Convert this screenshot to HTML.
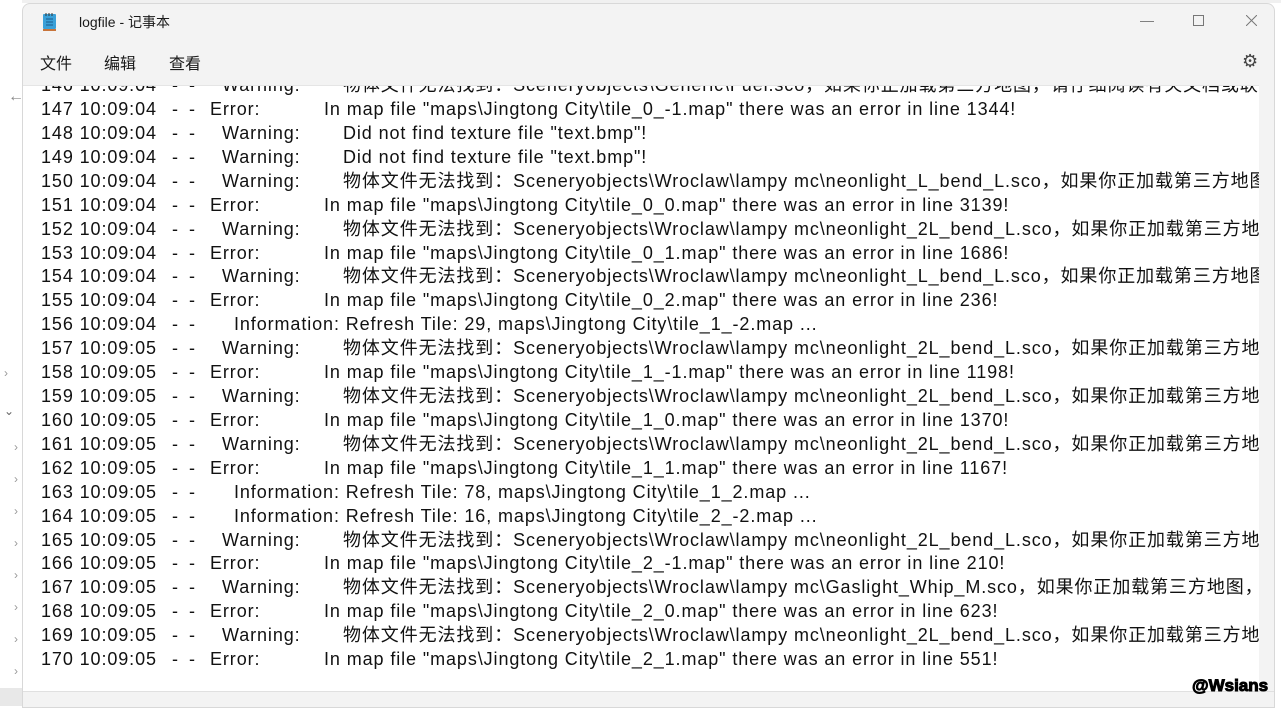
<!DOCTYPE html>
<html><head><meta charset="utf-8"><style>
body{margin:0;width:1281px;height:706px;overflow:hidden;background:#fff;font-family:"Liberation Sans","Noto Sans CJK SC",sans-serif;position:relative}
.bg{position:absolute;left:0;top:0;width:22px;height:706px;background:#fff}
.bgtop{position:absolute;left:0;top:0;width:1281px;height:3px;background:#f0f0f0}
.win{position:absolute;left:22px;top:3px;width:1251px;height:703px;background:#f3f3f3;border:1px solid #d8d8d8;border-radius:8px 8px 0 0;overflow:hidden}
.text{position:absolute;left:0;top:81px;width:1236px;height:606px;background:#fff;overflow:hidden;border-top:1px solid #e5e5e5}
.row{position:absolute;left:0;height:24px;line-height:24px;font-size:18px;color:#111;white-space:pre;letter-spacing:0.9px;margin-top:-2px}
.row span{position:absolute;top:0}
.status{position:absolute;left:0;top:687px;width:1251px;height:20px;background:#f3f3f3;border-top:1px solid #e0e0e0}
.menu{position:absolute;top:46px;font-size:16px;color:#1a1a1a}
.title{position:absolute;left:56px;top:8px;font-size:14px;color:#1a1a1a}
.ctl{position:absolute;top:8px;color:#777;font-size:14px}
.wm{position:absolute;left:1192px;top:676px;font-size:17px;font-weight:bold;color:#000;-webkit-text-stroke:1px #000;text-shadow:0 0 2px #fff}
</style></head><body>
<div class="bgtop"></div><div class="bg">
<div style="position:absolute;left:8px;top:88px;color:#888;font-size:16px">←</div>
<div style="position:absolute;left:4px;top:366px;color:#999;font-size:12px">›</div>
<div style="position:absolute;left:4px;top:404px;color:#666;font-size:12px">⌄</div>
<div style="position:absolute;left:14px;top:440px;color:#999;font-size:12px">›</div>
<div style="position:absolute;left:14px;top:472px;color:#999;font-size:12px">›</div>
<div style="position:absolute;left:14px;top:504px;color:#999;font-size:12px">›</div>
<div style="position:absolute;left:14px;top:536px;color:#999;font-size:12px">›</div>
<div style="position:absolute;left:14px;top:568px;color:#999;font-size:12px">›</div>
<div style="position:absolute;left:14px;top:600px;color:#999;font-size:12px">›</div>
<div style="position:absolute;left:14px;top:632px;color:#999;font-size:12px">›</div>
<div style="position:absolute;left:14px;top:664px;color:#999;font-size:12px">›</div>
<div style="position:absolute;left:0;top:688px;width:22px;height:18px;background:#e8e8e8"></div>
</div>
<div class="win">
<svg style="position:absolute;left:19px;top:8px" width="16" height="20" viewBox="0 0 16 20"><rect x="1" y="2" width="13" height="15" rx="1" fill="#3aa0d8"/><rect x="1" y="17" width="13" height="2" fill="#c8743a"/><path d="M4 7h7M4 10h7M4 13h7" stroke="#1a5a8a" stroke-width="1"/><path d="M4 1v3M7 1v3M10 1v3" stroke="#333" stroke-width="1"/></svg>
<div class="title">logfile - 记事本</div>
<div class="ctl" style="left:1117px">—</div>
<svg style="position:absolute;left:1170px;top:11px" width="11" height="11"><rect x="0.5" y="0.5" width="10" height="10" fill="none" stroke="#777"/></svg>
<svg style="position:absolute;left:1223px;top:11px" width="11" height="11"><path d="M0 0L11 11M11 0L0 11" stroke="#777"/></svg>
<div class="menu" style="left:17px">文件</div>
<div class="menu" style="left:81px">编辑</div>
<div class="menu" style="left:146px">查看</div>
<div style="position:absolute;left:1219px;top:47px;font-size:18px;color:#444">⚙</div>
<div class="text">
<div class="row" style="top:-11px"><span style="left:18px">146 10:09:04</span><span style="left:149px">-</span><span style="left:166px">-</span><span style="left:199px">Warning:</span><span style="left:320px">物体文件无法找到：Sceneryobjects\Generic\Fuel.sco，如果你正加载第三方地图，请仔细阅读有关文档或联系</span></div>
<div class="row" style="top:13px"><span style="left:18px">147 10:09:04</span><span style="left:149px">-</span><span style="left:166px">-</span><span style="left:187px">Error:</span><span style="left:301px">In map file "maps\Jingtong City\tile_0_-1.map" there was an error in line 1344!</span></div>
<div class="row" style="top:37px"><span style="left:18px">148 10:09:04</span><span style="left:149px">-</span><span style="left:166px">-</span><span style="left:199px">Warning:</span><span style="left:320px">Did not find texture file "text.bmp"!</span></div>
<div class="row" style="top:61px"><span style="left:18px">149 10:09:04</span><span style="left:149px">-</span><span style="left:166px">-</span><span style="left:199px">Warning:</span><span style="left:320px">Did not find texture file "text.bmp"!</span></div>
<div class="row" style="top:85px"><span style="left:18px">150 10:09:04</span><span style="left:149px">-</span><span style="left:166px">-</span><span style="left:199px">Warning:</span><span style="left:320px">物体文件无法找到：Sceneryobjects\Wroclaw\lampy mc\neonlight_L_bend_L.sco，如果你正加载第三方地图</span></div>
<div class="row" style="top:109px"><span style="left:18px">151 10:09:04</span><span style="left:149px">-</span><span style="left:166px">-</span><span style="left:187px">Error:</span><span style="left:301px">In map file "maps\Jingtong City\tile_0_0.map" there was an error in line 3139!</span></div>
<div class="row" style="top:133px"><span style="left:18px">152 10:09:04</span><span style="left:149px">-</span><span style="left:166px">-</span><span style="left:199px">Warning:</span><span style="left:320px">物体文件无法找到：Sceneryobjects\Wroclaw\lampy mc\neonlight_2L_bend_L.sco，如果你正加载第三方地图</span></div>
<div class="row" style="top:157px"><span style="left:18px">153 10:09:04</span><span style="left:149px">-</span><span style="left:166px">-</span><span style="left:187px">Error:</span><span style="left:301px">In map file "maps\Jingtong City\tile_0_1.map" there was an error in line 1686!</span></div>
<div class="row" style="top:180px"><span style="left:18px">154 10:09:04</span><span style="left:149px">-</span><span style="left:166px">-</span><span style="left:199px">Warning:</span><span style="left:320px">物体文件无法找到：Sceneryobjects\Wroclaw\lampy mc\neonlight_L_bend_L.sco，如果你正加载第三方地图</span></div>
<div class="row" style="top:204px"><span style="left:18px">155 10:09:04</span><span style="left:149px">-</span><span style="left:166px">-</span><span style="left:187px">Error:</span><span style="left:301px">In map file "maps\Jingtong City\tile_0_2.map" there was an error in line 236!</span></div>
<div class="row" style="top:228px"><span style="left:18px">156 10:09:04</span><span style="left:149px">-</span><span style="left:166px">-</span><span style="left:211px">Information: Refresh Tile: 29, maps\Jingtong City\tile_1_-2.map ...</span></div>
<div class="row" style="top:252px"><span style="left:18px">157 10:09:05</span><span style="left:149px">-</span><span style="left:166px">-</span><span style="left:199px">Warning:</span><span style="left:320px">物体文件无法找到：Sceneryobjects\Wroclaw\lampy mc\neonlight_2L_bend_L.sco，如果你正加载第三方地图</span></div>
<div class="row" style="top:276px"><span style="left:18px">158 10:09:05</span><span style="left:149px">-</span><span style="left:166px">-</span><span style="left:187px">Error:</span><span style="left:301px">In map file "maps\Jingtong City\tile_1_-1.map" there was an error in line 1198!</span></div>
<div class="row" style="top:300px"><span style="left:18px">159 10:09:05</span><span style="left:149px">-</span><span style="left:166px">-</span><span style="left:199px">Warning:</span><span style="left:320px">物体文件无法找到：Sceneryobjects\Wroclaw\lampy mc\neonlight_2L_bend_L.sco，如果你正加载第三方地图</span></div>
<div class="row" style="top:324px"><span style="left:18px">160 10:09:05</span><span style="left:149px">-</span><span style="left:166px">-</span><span style="left:187px">Error:</span><span style="left:301px">In map file "maps\Jingtong City\tile_1_0.map" there was an error in line 1370!</span></div>
<div class="row" style="top:348px"><span style="left:18px">161 10:09:05</span><span style="left:149px">-</span><span style="left:166px">-</span><span style="left:199px">Warning:</span><span style="left:320px">物体文件无法找到：Sceneryobjects\Wroclaw\lampy mc\neonlight_2L_bend_L.sco，如果你正加载第三方地图</span></div>
<div class="row" style="top:372px"><span style="left:18px">162 10:09:05</span><span style="left:149px">-</span><span style="left:166px">-</span><span style="left:187px">Error:</span><span style="left:301px">In map file "maps\Jingtong City\tile_1_1.map" there was an error in line 1167!</span></div>
<div class="row" style="top:396px"><span style="left:18px">163 10:09:05</span><span style="left:149px">-</span><span style="left:166px">-</span><span style="left:211px">Information: Refresh Tile: 78, maps\Jingtong City\tile_1_2.map ...</span></div>
<div class="row" style="top:420px"><span style="left:18px">164 10:09:05</span><span style="left:149px">-</span><span style="left:166px">-</span><span style="left:211px">Information: Refresh Tile: 16, maps\Jingtong City\tile_2_-2.map ...</span></div>
<div class="row" style="top:444px"><span style="left:18px">165 10:09:05</span><span style="left:149px">-</span><span style="left:166px">-</span><span style="left:199px">Warning:</span><span style="left:320px">物体文件无法找到：Sceneryobjects\Wroclaw\lampy mc\neonlight_2L_bend_L.sco，如果你正加载第三方地图</span></div>
<div class="row" style="top:467px"><span style="left:18px">166 10:09:05</span><span style="left:149px">-</span><span style="left:166px">-</span><span style="left:187px">Error:</span><span style="left:301px">In map file "maps\Jingtong City\tile_2_-1.map" there was an error in line 210!</span></div>
<div class="row" style="top:491px"><span style="left:18px">167 10:09:05</span><span style="left:149px">-</span><span style="left:166px">-</span><span style="left:199px">Warning:</span><span style="left:320px">物体文件无法找到：Sceneryobjects\Wroclaw\lampy mc\Gaslight_Whip_M.sco，如果你正加载第三方地图，请</span></div>
<div class="row" style="top:515px"><span style="left:18px">168 10:09:05</span><span style="left:149px">-</span><span style="left:166px">-</span><span style="left:187px">Error:</span><span style="left:301px">In map file "maps\Jingtong City\tile_2_0.map" there was an error in line 623!</span></div>
<div class="row" style="top:539px"><span style="left:18px">169 10:09:05</span><span style="left:149px">-</span><span style="left:166px">-</span><span style="left:199px">Warning:</span><span style="left:320px">物体文件无法找到：Sceneryobjects\Wroclaw\lampy mc\neonlight_2L_bend_L.sco，如果你正加载第三方地图</span></div>
<div class="row" style="top:563px"><span style="left:18px">170 10:09:05</span><span style="left:149px">-</span><span style="left:166px">-</span><span style="left:187px">Error:</span><span style="left:301px">In map file "maps\Jingtong City\tile_2_1.map" there was an error in line 551!</span></div>
</div>
<div class="status"></div>
</div>
<div class="wm">@Wsians</div>
</body></html>
